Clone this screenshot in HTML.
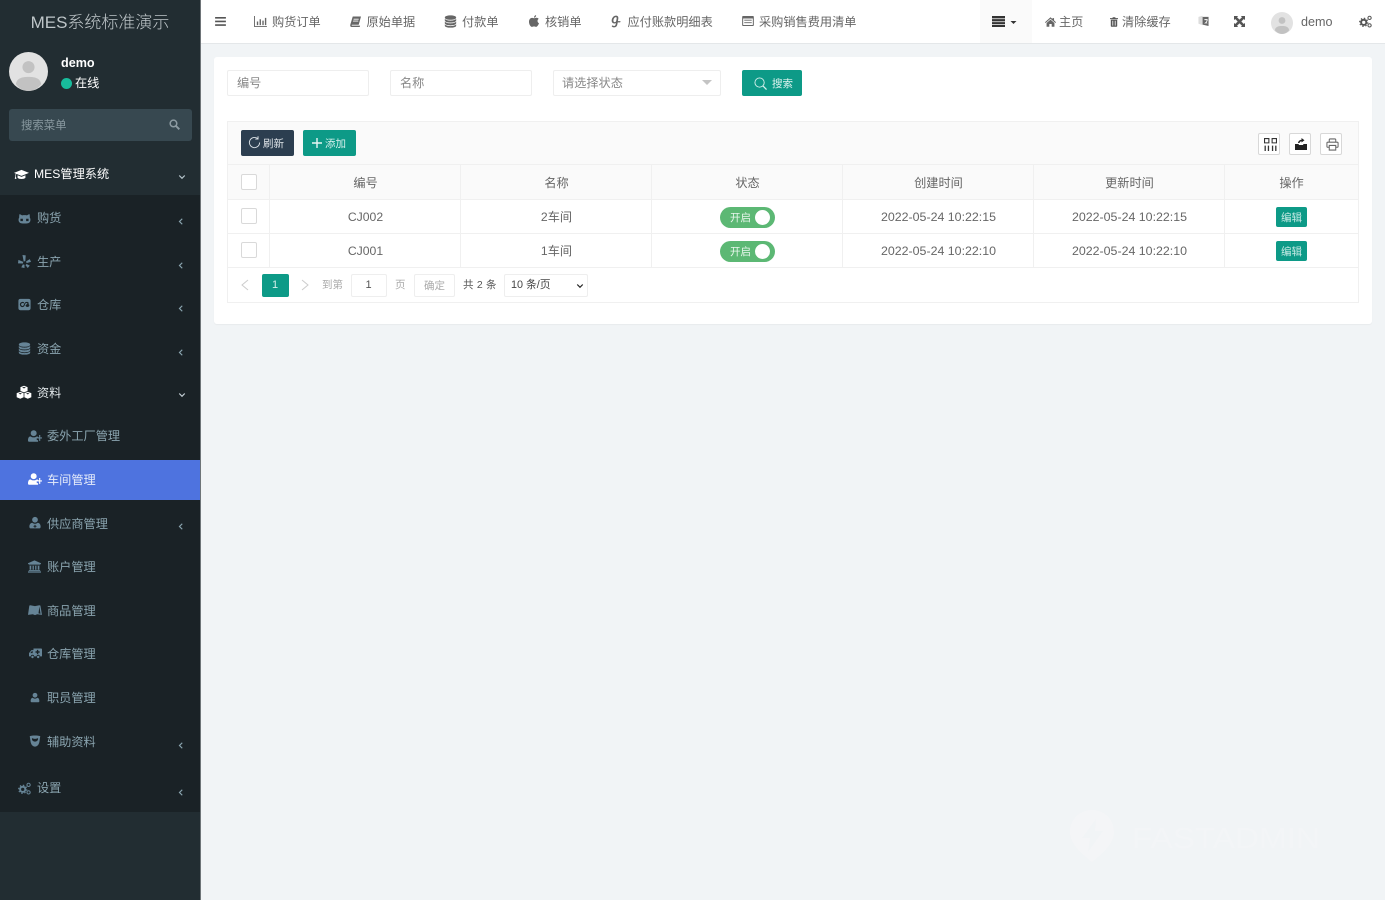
<!DOCTYPE html>
<html lang="zh-CN"><head><meta charset="utf-8"><title>车间管理</title>
<style>
*{box-sizing:border-box}
html{background:#f1f4f6}
html,body{margin:0;padding:0;width:1385px;height:900px;overflow:hidden}
body{background:#f1f4f6;font-family:"Liberation Sans","Noto Sans CJK SC",sans-serif;font-size:12.2px;color:#666}
#w{position:absolute;left:0;top:0;width:1385px;height:900px;overflow:hidden;filter:blur(.3px)}
.a{position:absolute}
.t{position:absolute;height:20px;line-height:20px;white-space:nowrap}
.c{text-align:center}
svg.i{position:absolute;fill:currentColor;overflow:visible}
.s{color:#8aa4af}.si{color:#668496}
.n{color:#666}
.b{position:absolute;background:#fff;border:1px solid #eee;border-radius:2px}
.l{position:absolute;background:#f0f0f0}
</style></head><body>
<svg width="0" height="0" style="position:absolute">
<defs>
<symbol id="cap" viewBox="0 0 16 16"><path d="M8 3 16 6.2 8 9.4 2.6 7.3 C2.2 8 2 9 2 10 L2.6 12.6 H.8 L1.4 10 C1.4 8.8 1.6 7.7 2 7 L0 6.2Z M3.8 8.8 8 10.5 12.2 8.8 V11.4 C11 13.2 5 13.2 3.8 11.4Z"/></symbol>
<symbol id="cat" viewBox="0 0 16 16"><path fill-rule="evenodd" d="M2 2.5 5 4.2C7 3.8 9 3.8 11 4.2L14 2.5C14.6 4 14.6 5.5 14.5 6.8 15.5 8 15.5 10 15 11.5 14 14 11 14.2 8 14.2 5 14.2 2 14 1 11.5.5 10 .5 8 1.5 6.8 1.4 5.5 1.4 4 2 2.500ZM3 8.300V11.200H6V8.300ZM10 8.300V11.200H13V8.300Z"/></symbol>
<symbol id="yelp" viewBox="0 0 16 16"><path d="M5.500 0 9.500 .4 9 7.500 7 8ZM10 7.800 14.500 5 16 8.500 10.500 10ZM.5 6 6.500 8.500 6 10.500 0 10.300ZM6 11.500 8 12 8 16 4 15.200ZM10.500 11 14.500 13 12 16 9.200 12.500Z"/></symbol>
<symbol id="lfm" viewBox="0 0 16 16"><path fill-rule="evenodd" d="M3 1H13A2.500 2.500 0 0 1 15.500 3.500V12.500A2.500 2.500 0 0 1 13 15H3A2.500 2.500 0 0 1 .5 12.500V3.500A2.500 2.500 0 0 1 3 1ZM5.500 4.800A3.200 3.200 0 1 0 5.500 11.200C7.500 11.200 8 9.800 8.500 8.300 8.900 7 9.500 6 10.700 6.200 11.800 6.400 11.800 7.500 10.800 7.800 9.400 8.100 9 9 9.600 10.200 10.300 11.500 13.800 11.400 14 9.300 14.100 7.900 13.200 7.700 12.800 7.500 13.800 6.200 12.800 4.800 10.900 4.800 9 4.800 8 6 7.400 7.700 7 8.900 6.500 9.800 5.500 9.800A1.800 1.800 0 1 1 6.800 6.700L7.500 5.500C7 5 6.300 4.800 5.500 4.800Z"/></symbol>
<symbol id="db" viewBox="0 0 16 16"><path d="M8 .5C12 .5 15 1.600 15 3.200S12 5.900 8 5.900 1 4.800 1 3.200 4 .5 8 .5ZM15 4.800V6.600C15 8.200 12 9.300 8 9.300S1 8.200 1 6.600V4.800C2.200 6.200 5 6.900 8 6.900S13.800 6.200 15 4.800ZM15 8.200V10C15 11.600 12 12.700 8 12.700S1 11.600 1 10V8.200C2.200 9.600 5 10.300 8 10.300S13.800 9.600 15 8.200ZM15 11.600V13C15 14.600 12 15.600 8 15.600S1 14.600 1 13V11.600C2.200 13 5 13.700 8 13.700S13.800 13 15 11.600Z"/></symbol>
<symbol id="cubes" viewBox="0 0 16 16"><path fill-rule="evenodd" d="M8 .8 11.800 2.200V6.400L8 7.800 4.200 6.400V2.200ZM8 2 6 2.800 8 3.600 10 2.800ZM4 7.300 7.600 8.700V13L4 14.600.200 13V8.700ZM4 8.500 2.200 9.200 4 10 5.800 9.200ZM12 7.300 15.800 8.700V13L12 14.600 8.400 13V8.700ZM12 8.500 10.200 9.200 12 10 13.800 9.200Z"/></symbol>
<symbol id="uplus" viewBox="0 0 16 16"><circle cx="6.500" cy="4.800" r="3.400"/><path d="M1 14.500C.5 14.500 0 14 0 13.300 0 10.500 .800 8.400 2.800 8.400 3.500 9 5 9.600 6.500 9.600S9.500 9 10.200 8.400C11 8.500 11.600 8.900 12 9.500V10.500H10V12.700H11.500V14.500ZM12.700 6.800H14V9.500H16V10.800H14V13.500H12.700V10.800H10.800V9.500H12.700Z"/></symbol>
<symbol id="umd" viewBox="0 0 16 16"><circle cx="8" cy="4.300" r="3.800"/><path fill-rule="evenodd" d="M2 15.800C1 15.800 .5 14.800 .5 13.500 .5 10.500 2 8.500 4.500 8.300 5.500 9.200 6.700 9.700 8 9.700S10.500 9.200 11.500 8.300C14 8.500 15.500 10.500 15.500 13.500 15.500 14.800 15 15.800 14 15.800ZM7.300 11.200V12.500H6V13.700H7.300V15H8.700V13.700H10V12.500H8.700V11.200Z"/></symbol>
<symbol id="bank" viewBox="0 0 16 16"><path d="M8 .5 16 4V5H0V4ZM1 5.500H15V6.300H1ZM2 7H4V12H2ZM5.600 7H7.200V12H5.600ZM8.800 7H10.400V12H8.800ZM12 7H14V12H12ZM1 12.500H15V13.500H1ZM0 14H16V15.500H0Z"/></symbol>
<symbol id="bk" viewBox="0 0 16 16"><path fill-rule="evenodd" d="M2.500 2.500 8 3.500 13 2.500 14.200 3 16 13.500 10.500 12.800 8 13.800 5.500 12.800 0 13.500 1.500 3ZM13 4 14.300 12.300 12 11.800Z"/></symbol>
<symbol id="amb" viewBox="0 0 16 16"><path fill-rule="evenodd" d="M5.500 1.800H15A1 1 0 0 1 16 2.800V11.500H13.300A2 2 0 0 0 9.300 11.500H6.300A2 2 0 0 0 2.300 11.500H0V7.500L3 3.800H5.500ZM9.700 3.500V5.200H8V7H9.700V8.700H11.400V7H13.100V5.200H11.400V3.500ZM3.600 5 1.500 7.500H4.500V5Z"/><circle cx="4.300" cy="12.300" r="1.500"/><circle cx="11.300" cy="12.300" r="1.500"/></symbol>
<symbol id="usr" viewBox="0 0 16 16"><circle cx="8" cy="4.300" r="3.800"/><path d="M2.500 15.500C1.500 15.500 1 14.800 1 13.800 1 11 2 8.500 4.300 8.300 5.300 9.200 6.600 9.800 8 9.800S10.700 9.200 11.700 8.300C14 8.500 15 11 15 13.800 15 14.800 14.500 15.500 13.500 15.500Z"/></symbol>
<symbol id="shd" viewBox="0 0 16 16"><path fill-rule="evenodd" d="M1 1.500C5 .300 11 .300 15 1.500L14 8.500C13.500 12 11.500 15.500 8 15.500S2.500 12 2 8.500ZM4 4.200C3.500 6.500 5 8.800 8 8.800S12.500 6.500 12 4.200C10 5.400 6 5.400 4 4.200Z"/></symbol>
<symbol id="cog" viewBox="0 0 16 16"><circle cx="5.800" cy="9" r="3.200" fill="none" stroke="currentColor" stroke-width="2.400"/><circle cx="5.800" cy="9" r="5" fill="none" stroke="currentColor" stroke-width="1.400" stroke-dasharray="1.800 2.130"/><circle cx="13" cy="3.500" r="2" fill="none" stroke="currentColor" stroke-width="1.300"/><circle cx="13" cy="12.800" r="2" fill="none" stroke="currentColor" stroke-width="1.300"/></symbol>
<symbol id="chl" viewBox="0 0 16 16"><path d="M10.500 2.500 5 8 10.500 13.500" fill="none" stroke="currentColor" stroke-width="2.400"/></symbol>
<symbol id="chd" viewBox="0 0 16 16"><path d="M2.500 5 8 10.500 13.500 5" fill="none" stroke="currentColor" stroke-width="2.400"/></symbol>
<symbol id="ava" viewBox="0 0 40 40"><circle cx="20" cy="20" r="20" fill="#e2e2e2"/><circle cx="20" cy="15.500" r="6.200" fill="#c2c2c2"/><path d="M7 33C8 27 13 25.500 20 25.500S32 27 33 33C30 37.500 25 40 20 40S10 37.500 7 33Z" fill="#c2c2c2"/></symbol>
</defs></svg>
<div id="w">
<!-- sidebar -->
<div class="a" style="left:0;top:0;width:200px;height:900px;background:#222d32"></div>
<div class="a" style="left:200px;top:0;width:1px;height:900px;background:#6e7478"></div>
<div class="a" style="left:0;top:195px;width:200px;height:617px;background:#1a2226"></div>
<div class="t c" style="left:0;top:13px;width:200px;font-size:17px;color:#bfc6c9;font-weight:300">MES系统标准演示</div>
<svg class="i" style="left:9px;top:52px;width:39px;height:39px"><use href="#ava"/></svg>
<div class="t" style="left:61px;top:53px;color:#fff;font-weight:700;font-size:12.6px">demo</div>
<div class="a" style="left:61px;top:78px;width:11px;height:11px;border-radius:50%;background:#18bc9c"></div>
<div class="t" style="left:75px;top:73px;color:#fff">在线</div>
<div class="a" style="left:9px;top:109px;width:183px;height:32px;background:#374850;border-radius:3px"></div>
<div class="t" style="left:21px;top:116px;color:#8a9aa1;font-size:11.400px">搜索菜单</div>
<svg class="i" viewBox="0 0 16 16" style="left:169px;top:119px;width:11px;height:11px;color:#8d9ba2"><circle cx="6.500" cy="6.500" r="4.800" fill="none" stroke="currentColor" stroke-width="2.200"/><path d="M10 10 15 15" stroke="currentColor" stroke-width="2.800" fill="none"/></svg>

<svg class="i" style="left:14px;top:167px;width:15px;height:15px;color:#fff"><use href="#cap"/></svg>
<div class="t" style="left:34px;top:164px;color:#fff">MES管理系统</div>
<svg class="i" style="left:178px;top:173px;width:8px;height:8px;color:#b8c7ce"><use href="#chd"/></svg>

<svg class="i si" style="left:18px;top:212px;width:13px;height:13px"><use href="#cat"/></svg>
<div class="t s" style="left:37px;top:208px">购货</div>
<svg class="i si" style="left:18px;top:255px;width:13px;height:13px"><use href="#yelp"/></svg>
<div class="t s" style="left:37px;top:252px">生产</div>
<svg class="i si" style="left:18px;top:298px;width:13px;height:13px"><use href="#lfm"/></svg>
<div class="t s" style="left:37px;top:295px">仓库</div>
<svg class="i si" style="left:18px;top:342px;width:13px;height:13px"><use href="#db"/></svg>
<div class="t s" style="left:37px;top:339px">资金</div>
<svg class="i" style="left:16px;top:385px;width:16px;height:15px;color:#fff"><use href="#cubes"/></svg>
<div class="t" style="left:37px;top:383px;color:#e0e6e9">资料</div>
<svg class="i si" style="left:28px;top:429px;width:14px;height:14px"><use href="#uplus"/></svg>
<div class="t s" style="left:47px;top:426px">委外工厂管理</div>
<div class="a" style="left:0;top:460px;width:200px;height:40px;background:#4e73df"></div>
<svg class="i" style="left:28px;top:472px;width:14px;height:14px;color:#fff"><use href="#uplus"/></svg>
<div class="t" style="left:47px;top:470px;color:#e6ecfa">车间管理</div>
<svg class="i si" style="left:29px;top:516px;width:12px;height:13px"><use href="#umd"/></svg>
<div class="t s" style="left:47px;top:514px">供应商管理</div>
<svg class="i si" style="left:28px;top:560px;width:13px;height:13px"><use href="#bank"/></svg>
<div class="t s" style="left:47px;top:557px">账户管理</div>
<svg class="i si" style="left:28px;top:603px;width:14px;height:14px"><use href="#bk"/></svg>
<div class="t s" style="left:47px;top:601px">商品管理</div>
<svg class="i si" style="left:29px;top:647px;width:13px;height:13px"><use href="#amb"/></svg>
<div class="t s" style="left:47px;top:644px">仓库管理</div>
<svg class="i si" style="left:30px;top:692px;width:10px;height:11px"><use href="#usr"/></svg>
<div class="t s" style="left:47px;top:688px">职员管理</div>
<svg class="i si" style="left:29px;top:735px;width:12px;height:12px"><use href="#shd"/></svg>
<div class="t s" style="left:47px;top:732px">辅助资料</div>
<svg class="i si" style="left:18px;top:782px;width:13px;height:13px"><use href="#cog"/></svg>
<div class="t s" style="left:37px;top:778px">设置</div>

<svg class="i s" style="left:177px;top:217px;width:8px;height:9px"><use href="#chl"/></svg>
<svg class="i s" style="left:177px;top:261px;width:8px;height:9px"><use href="#chl"/></svg>
<svg class="i s" style="left:177px;top:304px;width:8px;height:9px"><use href="#chl"/></svg>
<svg class="i s" style="left:177px;top:348px;width:8px;height:9px"><use href="#chl"/></svg>
<svg class="i" style="left:178px;top:391px;width:8px;height:8px;color:#c5d0d6"><use href="#chd"/></svg>
<svg class="i s" style="left:177px;top:522px;width:8px;height:9px"><use href="#chl"/></svg>
<svg class="i s" style="left:177px;top:741px;width:8px;height:9px"><use href="#chl"/></svg>
<svg class="i s" style="left:177px;top:788px;width:8px;height:9px"><use href="#chl"/></svg>

<!-- header -->
<div class="a" style="left:201px;top:0;width:1184px;height:44px;background:#fff;border-bottom:1px solid #e4e7e9"></div>
<div class="a" style="left:980px;top:0;width:52px;height:43px;background:#fafafa"></div>
<svg class="i" viewBox="0 0 12 10" style="left:215px;top:17px;width:11px;height:9px;color:#555"><path d="M0 0H12V1.800H0ZM0 4H12V5.800H0ZM0 8H12V9.800H0Z"/></svg>
<svg class="i n" viewBox="0 0 14 12" style="left:254px;top:16px;width:13px;height:11px"><path d="M0 0H1V11H14V12H0ZM3 6H4.500V10H3ZM6 3.500H7.500V10H6ZM9 5H10.500V10H9ZM11.800 2H13.300V10H11.800Z"/></svg>
<div class="t n" style="left:272px;top:12px">购货订单</div>
<svg class="i n" viewBox="0 0 12 12" style="left:350px;top:16px;width:11px;height:11px"><path d="M3 .500H12L9.500 9.500H2.300C1.800 9.500 1.600 10.500 2.300 10.500H11L10.600 12H1.800C.5 12 0 10.800 .3 9.500ZM4 3H9.500V4H3.800ZM3.500 5H9V6H3.200Z" fill-rule="evenodd"/></svg>
<div class="t n" style="left:366.500px;top:12px">原始单据</div>
<svg class="i n" style="left:444px;top:15px;width:13px;height:13px"><use href="#db"/></svg>
<div class="t n" style="left:462px;top:12px">付款单</div>
<svg class="i n" viewBox="0 0 12 14" style="left:529px;top:15px;width:10px;height:12px"><path d="M8.500 0C8.600 1.800 7.400 3 6 3 5.900 1.500 7 .2 8.500 0ZM6 3.700C7 3.700 7.800 3.100 9 3.100 10 3.100 11 3.600 11.600 4.500 9.500 5.800 9.900 8.800 12 9.700 11.300 11.600 9.900 14 8.500 14 7.500 14 7 13.400 6 13.400S4.500 14 3.500 14C1.800 14 0 10.800 0 8 0 5 1.800 3.300 3.500 3.300 4.500 3.300 5.300 3.700 6 3.700Z"/></svg>
<div class="t n" style="left:545px;top:12px">核销单</div>
<svg class="i n" viewBox="0 0 12 14" style="left:611px;top:15px;width:10px;height:13px"><path fill-rule="evenodd" d="M6 0C8 0 9 1.300 8.800 3.200L8.300 6.500H11.500L11 8H8.100L7.500 11C7.100 13 5.500 14 3.500 14 2 14 1 13.300 .8 12.400L2.400 11.500C2.600 12.100 3 12.400 3.700 12.400 4.800 12.400 5.400 11.700 5.600 10.500L5.900 8.800C5.400 9.200 4.800 9.400 4 9.400 2 9.400 .8 8 .8 6 .8 3 3 0 6 0ZM5.800 1.800C4.300 1.800 2.900 4 2.900 5.900 2.900 7.100 3.500 7.800 4.500 7.800 5.500 7.800 6.100 7 6.300 6L6.800 3.200C6.900 2.300 6.500 1.800 5.800 1.800Z"/></svg>
<div class="t n" style="left:627.500px;top:12px">应付账款明细表</div>
<svg class="i n" viewBox="0 0 14 12" style="left:742px;top:16px;width:12px;height:10px"><path fill-rule="evenodd" d="M1 0H13A1 1 0 0 1 14 1V11A1 1 0 0 1 13 12H1A1 1 0 0 1 0 11V1A1 1 0 0 1 1 0ZM1.200 3V10.800H12.800V3ZM2.500 4.500H11.500V5.500H2.500ZM2.500 7.500H11.500V8.500H2.500Z"/></svg>
<div class="t n" style="left:759px;top:12px">采购销售费用清单</div>

<svg class="i" viewBox="0 0 13 11" style="left:992px;top:16px;width:13px;height:11px;color:#333"><path d="M0 0H13V2.400H0ZM0 3.100H13V5.400H0ZM0 6.100H13V8.300H0ZM0 9H13V11H0Z"/></svg>
<svg class="i" viewBox="0 0 8 4" style="left:1010px;top:21px;width:7px;height:3px;color:#333"><path d="M0 0H8L4 4Z"/></svg>
<svg class="i n" viewBox="0 0 14 12" style="left:1045px;top:17px;width:11px;height:10px"><path d="M7 0 9.500 2.200V1H11.500V4L14 6.300 13.200 7.200 7 1.800 .8 7.200 0 6.300ZM2 7.200 7 3 12 7.200V12H8.500V8.500H5.500V12H2Z"/></svg>
<div class="t n" style="left:1059px;top:12px">主页</div>
<svg class="i n" viewBox="0 0 10 12" style="left:1110px;top:16.500px;width:8px;height:10px;color:#555"><path fill-rule="evenodd" d="M3.500 0H6.500L7 1.200H10V2.400H0V1.200H3ZM1 3H9V11A1 1 0 0 1 8 12H2A1 1 0 0 1 1 11ZM3 4.500V10.500H4V4.500ZM6 4.500V10.500H7V4.500Z"/></svg>
<div class="t n" style="left:1122px;top:12px">清除缓存</div>
<svg class="i n" viewBox="0 0 12 13" style="left:1198px;top:15px;width:11px;height:12px"><path d="M.5 2 5 .8V11L.5 9.500Z" fill="#ddd"/><path fill-rule="evenodd" d="M5 2H11.500V12L5 10.500ZM7 4.500V5.500H9.500C9.300 7 8.500 8 7 8.800L7.600 9.500 8.700 8.700 10 9.500V8.500L9.300 8C10 7.300 10.300 6.500 10.500 5.500V4.500Z" fill="#666"/></svg>
<svg class="i" viewBox="0 0 12 12" style="left:1234px;top:16px;width:11px;height:11px;color:#555"><path d="M0 0H4.500L3.300 1.300 6 4 8.700 1.300 7.500 0H12V4.500L10.700 3.300 8 6 10.700 8.700 12 7.500V12H7.500L8.700 10.700 6 8 3.300 10.700 4.500 12H0V7.500L1.300 8.700 4 6 1.300 3.300 0 4.500Z"/></svg>
<svg class="i" style="left:1271px;top:12px;width:22px;height:22px"><use href="#ava"/></svg>
<div class="t n" style="left:1301px;top:12px;font-size:12.600px">demo</div>
<svg class="i" style="left:1359px;top:15px;width:13px;height:13px;color:#555"><use href="#cog"/></svg>

<!-- panel -->
<div class="a" style="left:214px;top:57px;width:1158px;height:267px;background:#fff;border-radius:3px;box-shadow:0 1px 1px rgba(0,0,0,.04)"></div>
<div class="b" style="left:227px;top:70px;width:142px;height:26px"></div>
<div class="t" style="left:237px;top:73px;color:#888">编号</div>
<div class="b" style="left:390px;top:70px;width:142px;height:26px"></div>
<div class="t" style="left:400px;top:73px;color:#888">名称</div>
<div class="b" style="left:553px;top:70px;width:168px;height:26px"></div>
<div class="t" style="left:562px;top:73px;color:#888">请选择状态</div>
<svg class="i" viewBox="0 0 10 5" style="left:702px;top:80px;width:10px;height:5px;color:#c4c4c4"><path d="M0 0H10L5 5Z"/></svg>
<div class="a" style="left:742px;top:70px;width:60px;height:26px;background:#0d9a87;border-radius:2px"></div>
<svg class="i" viewBox="0 0 14 14" style="left:754px;top:77px;width:13px;height:13px;color:#d5efeb"><circle cx="6" cy="6" r="5" fill="none" stroke="currentColor" stroke-width="1"/><path d="M9.800 9.800 13.500 13.500" stroke="currentColor" stroke-width="1.400" fill="none"/></svg>
<div class="t" style="left:772px;top:74px;color:#e2f4f1;font-size:10.500px">搜索</div>

<!-- table -->
<div class="a" style="left:227px;top:121px;width:1132px;height:182px;background:#fff;border:1px solid #f0f0f0"></div>
<div class="a" style="left:228px;top:122px;width:1130px;height:77px;background:#fafafa"></div>
<div class="a" style="left:241px;top:130px;width:53px;height:26px;background:#2c3e50;border-radius:2px"></div>
<svg class="i" viewBox="0 0 14 14" style="left:248px;top:136px;width:13px;height:13px;color:#dde3e8"><path d="M12.500 7A5.500 5.500 0 1 1 10.500 2.800M10.800 .3V3.300H7.800" fill="none" stroke="currentColor" stroke-width="1"/></svg>
<div class="t" style="left:263px;top:134px;color:#dfe4e8;font-size:10.500px">刷新</div>
<div class="a" style="left:303px;top:130px;width:53px;height:26px;background:#0d9a87;border-radius:2px"></div>
<svg class="i" viewBox="0 0 10 10" style="left:312px;top:138px;width:10px;height:10px;color:#e8f6f4"><path d="M4.300 0H5.700V4.300H10V5.700H5.700V10H4.300V5.700H0V4.300H4.300Z"/></svg>
<div class="t" style="left:325px;top:134px;color:#d7f0ec;font-size:10.500px">添加</div>

<div class="b" style="left:1258px;top:133px;width:22px;height:22px;border-color:#d8d8d8"></div>
<svg class="i" viewBox="0 0 12 12" style="left:1264px;top:138px;width:13px;height:13px;color:#333"><path fill-rule="evenodd" d="M0 0H5V5H0ZM1 1V4H4V1ZM7 0H12V5H7ZM8 1V4H11V1ZM.5 7H1.700V12H.5ZM3.500 7H4.700V12H3.500ZM7.300 7H8.500V12H7.300ZM10.300 7H11.500V12H10.300Z"/></svg>
<div class="b" style="left:1289px;top:133px;width:22px;height:22px;border-color:#d8d8d8"></div>
<svg class="i" viewBox="0 0 12 12" style="left:1295px;top:138px;width:12px;height:12px;color:#222"><path d="M6.500 0 9.500 2.300 6.500 4.500V3.200C5.500 3.200 4.800 3.800 4.500 5H3C3.200 3.200 4.700 1.800 6.500 1.700ZM0 6H3.500L4 7H8L8.500 6H12V12H0Z"/></svg>
<div class="b" style="left:1320px;top:133px;width:22px;height:22px;border-color:#d8d8d8"></div>
<svg class="i" viewBox="0 0 14 14" style="left:1326px;top:138px;width:13px;height:13px;color:#666"><path d="M3.500 4.500V2Q3.500 1 4.500 1H9.500Q10.500 1 10.500 2V4.500M3.500 10H2Q1 10 1 9V5.500Q1 4.500 2 4.500H12Q13 4.500 13 5.500V9Q13 10 12 10H10.500M3.500 8H10.500V13H3.500Z" fill="none" stroke="currentColor" stroke-width="1.100"/></svg>

<div class="a" style="left:228px;top:165px;width:1130px;height:35px;background:#fafafa"></div>
<div class="l" style="left:228px;top:164px;width:1130px;height:1px"></div>
<div class="l" style="left:228px;top:199px;width:1130px;height:1px"></div>
<div class="l" style="left:228px;top:233px;width:1130px;height:1px"></div>
<div class="l" style="left:228px;top:267px;width:1130px;height:1px"></div>
<div class="l" style="left:269px;top:165px;width:1px;height:102px"></div>
<div class="l" style="left:460px;top:165px;width:1px;height:102px"></div>
<div class="l" style="left:651px;top:165px;width:1px;height:102px"></div>
<div class="l" style="left:842px;top:165px;width:1px;height:102px"></div>
<div class="l" style="left:1033px;top:165px;width:1px;height:102px"></div>
<div class="l" style="left:1224px;top:165px;width:1px;height:102px"></div>

<div class="b" style="left:241px;top:174px;width:16px;height:16px;border-color:#d9d9d9"></div>
<div class="b" style="left:241px;top:208px;width:16px;height:16px;border-color:#d9d9d9"></div>
<div class="b" style="left:241px;top:242px;width:16px;height:16px;border-color:#d9d9d9"></div>

<div class="t c" style="left:270.500px;top:173px;width:190px">编号</div>
<div class="t c" style="left:461.500px;top:173px;width:190px">名称</div>
<div class="t c" style="left:652.500px;top:173px;width:190px">状态</div>
<div class="t c" style="left:843.500px;top:173px;width:190px">创建时间</div>
<div class="t c" style="left:1034.500px;top:173px;width:190px">更新时间</div>
<div class="t c" style="left:1225px;top:173px;width:133px">操作</div>

<div class="t c" style="left:270.500px;top:207px;width:190px">CJ002</div>
<div class="t c" style="left:461.500px;top:207px;width:190px">2车间</div>
<div class="a" style="left:720px;top:207px;width:55px;height:21px;border-radius:11px;background:#5cb874"></div>
<div class="t" style="left:730px;top:208px;color:#e8f6ec;font-size:10.500px">开启</div>
<div class="a" style="left:755px;top:210px;width:15px;height:15px;border-radius:50%;background:#fff"></div>
<div class="t c" style="left:843.500px;top:207px;width:190px;font-size:12.400px">2022-05-24 10:22:15</div>
<div class="t c" style="left:1034.500px;top:207px;width:190px;font-size:12.400px">2022-05-24 10:22:15</div>
<div class="a" style="left:1276px;top:207px;width:31px;height:20px;background:#0d9a87;border-radius:2px"></div>
<div class="t c" style="left:1276px;top:208px;width:31px;color:#c9ebe6;font-size:10.500px">编辑</div>

<div class="t c" style="left:270.500px;top:241px;width:190px">CJ001</div>
<div class="t c" style="left:461.500px;top:241px;width:190px">1车间</div>
<div class="a" style="left:720px;top:241px;width:55px;height:21px;border-radius:11px;background:#5cb874"></div>
<div class="t" style="left:730px;top:242px;color:#e8f6ec;font-size:10.500px">开启</div>
<div class="a" style="left:755px;top:244px;width:15px;height:15px;border-radius:50%;background:#fff"></div>
<div class="t c" style="left:843.500px;top:241px;width:190px;font-size:12.400px">2022-05-24 10:22:10</div>
<div class="t c" style="left:1034.500px;top:241px;width:190px;font-size:12.400px">2022-05-24 10:22:10</div>
<div class="a" style="left:1276px;top:241px;width:31px;height:20px;background:#0d9a87;border-radius:2px"></div>
<div class="t c" style="left:1276px;top:242px;width:31px;color:#c9ebe6;font-size:10.500px">编辑</div>

<!-- pagination -->
<svg class="i" viewBox="0 0 8 12" style="left:241px;top:279px;width:8px;height:12px;color:#ccc"><path d="M7 1 1 6 7 11" fill="none" stroke="currentColor" stroke-width="1"/></svg>
<div class="a" style="left:262px;top:274px;width:27px;height:23px;background:#0d9a87;border-radius:2px"></div>
<div class="t c" style="left:261.500px;top:275px;width:27px;color:#d5efeb;font-size:11px">1</div>
<svg class="i" viewBox="0 0 8 12" style="left:301px;top:279px;width:8px;height:12px;color:#ccc"><path d="M1 1 7 6 1 11" fill="none" stroke="currentColor" stroke-width="1"/></svg>
<div class="t" style="left:322px;top:275px;color:#aaa;font-size:10.500px">到第</div>
<div class="b" style="left:351px;top:274px;width:36px;height:23px"></div>
<div class="t c" style="left:350.500px;top:275px;width:36px;color:#555;font-size:11px">1</div>
<div class="t" style="left:395px;top:275px;color:#aaa;font-size:10.500px">页</div>
<div class="b" style="left:414px;top:274px;width:41px;height:23px"></div>
<div class="t c" style="left:414px;top:276px;width:41px;color:#aaa;font-size:10.500px">确定</div>
<div class="t" style="left:463px;top:275px;color:#555;font-size:10.500px;letter-spacing:.2px">共 2 条</div>
<div class="b" style="left:504px;top:274px;width:84px;height:23px"></div>
<div class="t" style="left:511px;top:275px;color:#444;font-size:10.800px">10 条/页</div>
<svg class="i" style="left:576px;top:282px;width:8px;height:8px;color:#222"><use href="#chd"/></svg>

<!-- watermark -->
<svg class="i" viewBox="0 0 44 52" style="left:1070px;top:810px;width:44px;height:52px;color:#f4f5f7"><path fill-rule="evenodd" d="M22 0C34 0 44 9 44 22 44 34 32 44 22 52 12 44 0 34 0 22 0 9 10 0 22 0ZM26 9 12 28H20L18 42 33 21H25Z"/></svg>
<svg class="i" style="left:1130px;top:820px;width:195px;height:34px"><text x="2" y="28" font-family="Liberation Sans" font-size="29" fill="#f3f5f7" textLength="188" lengthAdjust="spacingAndGlyphs">FASTADMIN</text></svg>
</div>
</body></html>
